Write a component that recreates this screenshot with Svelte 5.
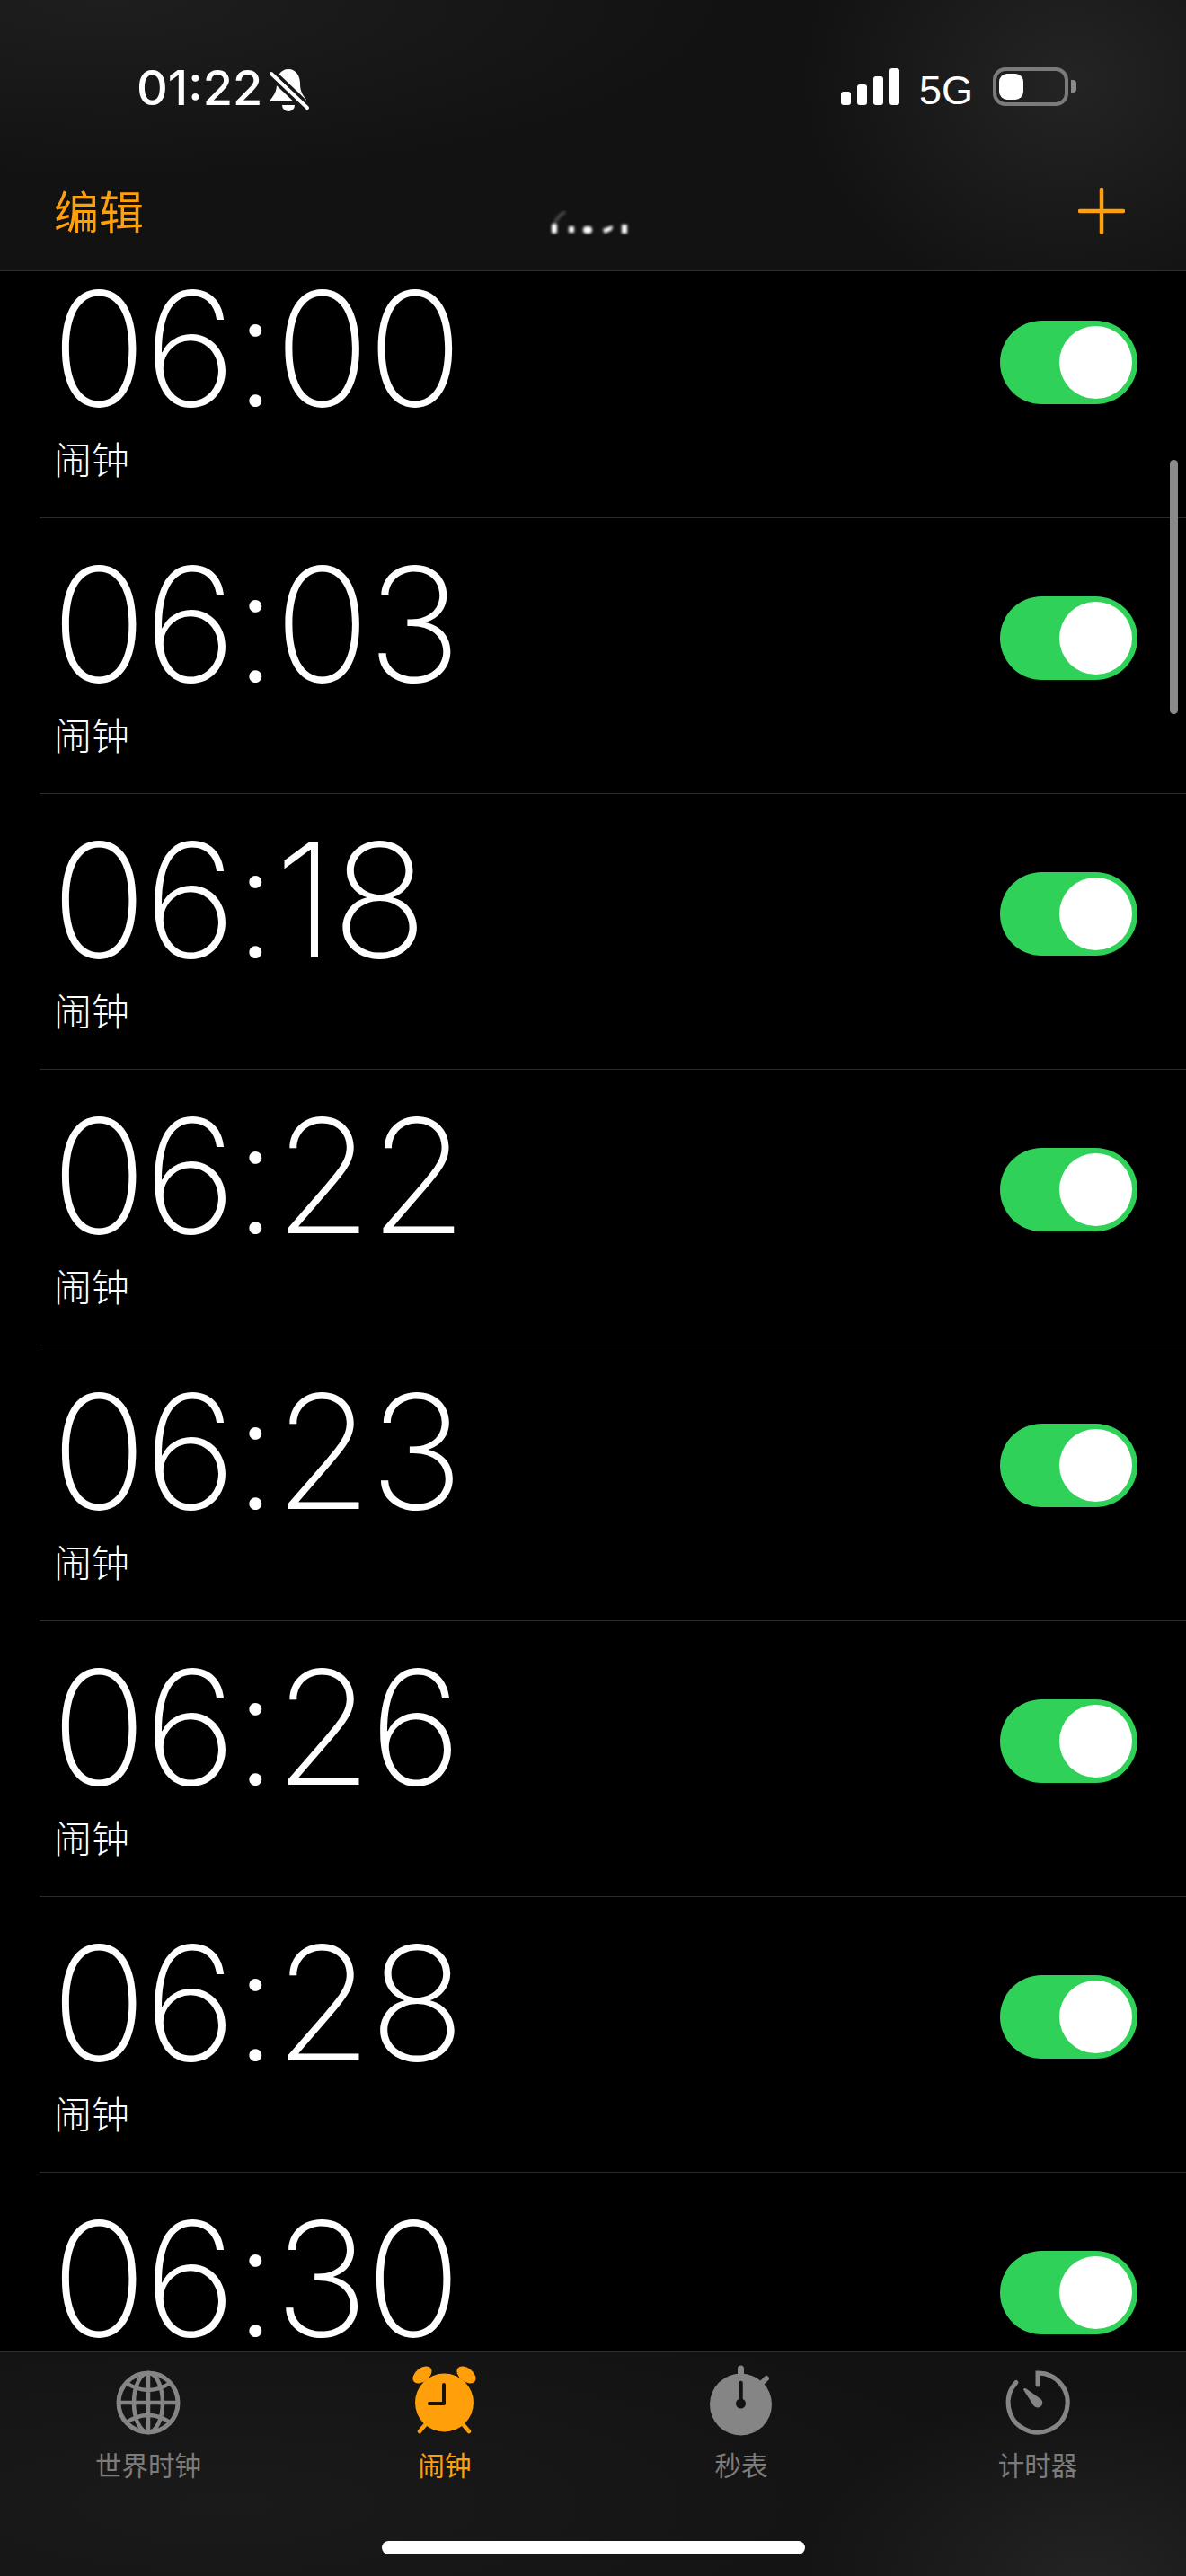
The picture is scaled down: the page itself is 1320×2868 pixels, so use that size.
<script>
	const alarms = ['06:00', '06:03', '06:18', '06:22', '06:23', '06:26', '06:28', '06:30'];
	const tabs = [
		{ id: 'world', label: '世界时钟' },
		{ id: 'alarm', label: '闹钟', active: true },
		{ id: 'stopwatch', label: '秒表' },
		{ id: 'timer', label: '计时器' }
	];
</script>

<div class="screen">
	<header class="top">
		<div class="status">
			<div class="status-left">
				<span class="clock">01:22</span>
				<svg class="bell" viewBox="0 0 70 70">
					<path fill="#fff" d="M35 14C26 14 22 22 22 30C22 39 19 43 15 48V50H55V48C51 43 48 39 48 30C48 22 44 14 35 14Z" />
					<path fill="#fff" d="M28 54a7 7 0 0 0 14 0z" />
					<path stroke="#171717" stroke-width="11" d="M14 17L58 59" />
					<path stroke="#fff" stroke-width="4" stroke-linecap="round" d="M16 19L56 57" />
				</svg>
			</div>
			<div class="status-right">
				<div class="signal">
					<i class="b1"></i><i class="b2"></i><i class="b3"></i><i class="b4"></i>
				</div>
				<span class="net">5G</span>
				<div class="battery"><div class="level"></div></div>
				<div class="nub"></div>
			</div>
		</div>
		<nav class="nav">
			<span class="edit">编辑</span>
			<svg class="ghost" width="100" height="30" viewBox="0 0 100 30">
				<g fill="#fff" filter="url(#soft)">
					<rect x="3" y="17" width="6" height="11" rx="2" />
					<rect x="22" y="20" width="6" height="7" />
					<rect x="38" y="20" width="10" height="8" rx="4" />
					<path d="M60 23L71 19L70 24L62 28Z" />
					<rect x="81" y="18" width="6" height="10" />
				</g>
				<path stroke="#fff" stroke-opacity=".22" stroke-width="4" fill="none" filter="url(#soft)" d="M6 17Q11 7 18 4" />
				<defs>
					<filter id="soft"><feGaussianBlur stdDeviation="1.6" /></filter>
				</defs>
			</svg>
			<svg class="plus" viewBox="0 0 52 52">
				<path stroke="#ff9f0a" stroke-width="4.5" stroke-linecap="round" d="M26 2V50M2 26H50" />
			</svg>
		</nav>
	</header>

	<main class="list">
		<div class="rows">
			{#each alarms as time}
				<section class="row">
					<div class="info">
						<div class="time">{time}</div>
						<div class="name">闹钟</div>
					</div>
					<div class="toggle"><div class="knob"></div></div>
				</section>
			{/each}
		</div>
		<div class="scrollbar"></div>
	</main>

	<footer class="tabbar">
		<div class="tabs">
			{#each tabs as tab}
				<div class="tab" class:active={tab.active}>
					{#if tab.id === 'world'}
						<svg viewBox="0 0 90 90" fill="none" stroke="#858585" stroke-width="4.5">
							<circle cx="45" cy="45" r="33" stroke-width="5" />
							<ellipse cx="45" cy="45" rx="16" ry="33" />
							<path d="M45 12V78M12 45H78M19 22Q45 40 71 22M19 68Q45 50 71 68" />
						</svg>
					{:else if tab.id === 'alarm'}
						<svg viewBox="0 0 90 90">
							<circle cx="44.5" cy="45" r="32.5" fill="#ff9f0a" />
							<ellipse cx="20" cy="14" rx="12" ry="7.5" fill="#ff9f0a" transform="rotate(-38 20 14)" />
							<ellipse cx="69" cy="14" rx="12" ry="7.5" fill="#ff9f0a" transform="rotate(38 69 14)" />
							<path stroke="#ff9f0a" stroke-width="4.5" stroke-linecap="round" d="M23 70L17 77M66 70L72 77" />
							<path stroke="#1b1206" stroke-width="4" stroke-linecap="round" stroke-linejoin="round" fill="none" d="M44 25V46H28" />
						</svg>
					{:else if tab.id === 'stopwatch'}
						<svg class="tall" viewBox="0 0 90 90">
							<circle cx="44.5" cy="52" r="34.5" fill="#858585" />
							<path stroke="#858585" stroke-width="7" stroke-linecap="round" d="M44.5 12V20" />
							<path stroke="#858585" stroke-width="6" stroke-linecap="round" d="M66 30L73 23" />
							<path stroke="#121212" stroke-width="4.5" stroke-linecap="round" d="M44.5 28V50" />
							<circle cx="44.5" cy="51" r="5.5" fill="#121212" />
						</svg>
					{:else}
						<svg viewBox="0 0 90 90">
							<path fill="none" stroke="#858585" stroke-width="5" stroke-linecap="round" d="M45 25V12A33 33 0 1 1 21 22.5" />
							<path fill="#858585" d="M29 30.5Q30 28 33 30L49 41.5a5.5 5.5 0 1 1-8.5 7Z" />
						</svg>
					{/if}
					<span class="label">{tab.label}</span>
				</div>
			{/each}
		</div>
		<div class="home"></div>
	</footer>
</div>

<style>
	:global(body) {
		margin: 0;
		background: #000;
	}

	.screen {
		width: 1320px;
		height: 2868px;
		display: flex;
		flex-direction: column;
		background: #000;
		color: #fff;
		font-family: Inter, "Noto Sans CJK SC", sans-serif;
		overflow: hidden;
	}

	.top {
		height: 301px;
		flex: none;
		border-bottom: 1px solid #2e2e2e;
		background:
			radial-gradient(300px 260px at 1190px 90px, #242424, transparent),
			radial-gradient(700px 200px at 120px 0, #1e1e1e, transparent),
			#121212;
		display: flex;
		flex-direction: column;
	}

	.status {
		height: 118px;
		padding: 75px 122px 0 152px;
		box-sizing: border-box;
		display: flex;
		justify-content: space-between;
		align-items: flex-start;
	}

	.status-left {
		display: flex;
		align-items: center;
		gap: 19px;
		height: 46px;
	}

	.clock {
		font-size: 54px;
		font-weight: 500;
		line-height: 46px;
	}

	.bell {
		width: 70px;
		height: 70px;
		margin-left: -25px;
		margin-right: -15px;
	}

	.status-right {
		display: flex;
		align-items: flex-start;
	}

	.signal {
		display: flex;
		align-items: flex-end;
		gap: 7px;
		height: 41px;
		margin-top: 1px;
	}

	.signal i {
		width: 11px;
		background: #fff;
		border-radius: 3px;
	}

	.b1 { height: 15px; }
	.b2 { height: 23px; }
	.b3 { height: 32px; }
	.b4 { height: 41px; }

	.net {
		font-family: "Liberation Sans", sans-serif;
		font-size: 45px;
		line-height: 45px;
		margin: 3px 0 0 22px;
		width: 82px;
	}

	.battery {
		width: 84px;
		height: 43px;
		box-sizing: border-box;
		border: 4px solid #7b7b7b;
		border-radius: 14px;
		padding: 3px;
	}

	.level {
		width: 27px;
		height: 29px;
		background: #fff;
		border-radius: 9px;
	}

	.nub {
		width: 6px;
		height: 14px;
		margin: 14px 0 0 3px;
		background: #8a8a8a;
		border-radius: 0 4px 4px 0;
	}

	.nav {
		flex: 1;
		position: relative;
		display: flex;
		justify-content: space-between;
		padding: 90px 68px 0 60px;
		align-items: flex-start;
	}

	.edit {
		font-size: 50px;
		line-height: 50px;
		margin-top: 4px;
		color: #ff9f0a;
		font-weight: 400;
	}

	.ghost {
		position: absolute;
		left: 611px;
		top: 114px;
	}

	.plus {
		width: 52px;
		height: 52px;
		margin-top: 1px;
	}

	.list {
		flex: 1;
		min-height: 0;
		position: relative;
		overflow: hidden;
	}

	.rows {
		margin-top: -32px;
	}

	.row {
		height: 307px;
		box-sizing: border-box;
		margin-left: 44px;
		padding: 0 54px 0 16px;
		border-bottom: 1px solid #2a2a2a;
		display: flex;
		justify-content: space-between;
		align-items: flex-start;
	}

	.time {
		font-size: 176px;
		font-weight: 200;
		line-height: 176px;
		letter-spacing: -3px;
		margin: 30px 0 0 -3px;
	}

	.name {
		font-size: 42px;
		line-height: 48px;
		font-weight: 300;
		margin-top: 13px;
	}

	.toggle {
		width: 153px;
		height: 93px;
		margin-top: 87px;
		box-sizing: border-box;
		padding: 6px;
		background: #30d158;
		border-radius: 47px;
		display: flex;
		justify-content: flex-end;
	}

	.knob {
		width: 81px;
		height: 81px;
		background: #fff;
		border-radius: 50%;
	}

	.scrollbar {
		position: absolute;
		top: 210px;
		right: 9px;
		width: 9px;
		height: 283px;
		background: #8a8a8a;
		border-radius: 5px;
	}

	.tabbar {
		height: 250px;
		flex: none;
		box-sizing: border-box;
		border-top: 1px solid #2e2e2e;
		background:
			radial-gradient(320px 220px at 1210px 260px, #242424, transparent),
			radial-gradient(900px 240px at 250px 170px, #1a1a1a, transparent),
			#121212;
		display: flex;
		flex-direction: column;
	}

	.tabs {
		display: grid;
		grid-template-columns: repeat(4, 330px);
		height: 210px;
	}

	.tab {
		display: flex;
		flex-direction: column;
		align-items: center;
		padding-top: 11px;
		color: #7c7c7c;
	}

	.tab svg {
		width: 90px;
		height: 90px;
		display: block;
		overflow: visible;
	}

	.tab svg.tall {
		margin-top: -5px;
		margin-bottom: 5px;
	}

	.tab.active {
		color: #ff9f0a;
	}

	.label {
		font-size: 29.5px;
		line-height: 34px;
		margin-top: 8px;
	}

	.home {
		width: 471px;
		height: 15px;
		margin: 0 0 0 425px;
		background: #fff;
		border-radius: 8px;
	}
</style>
